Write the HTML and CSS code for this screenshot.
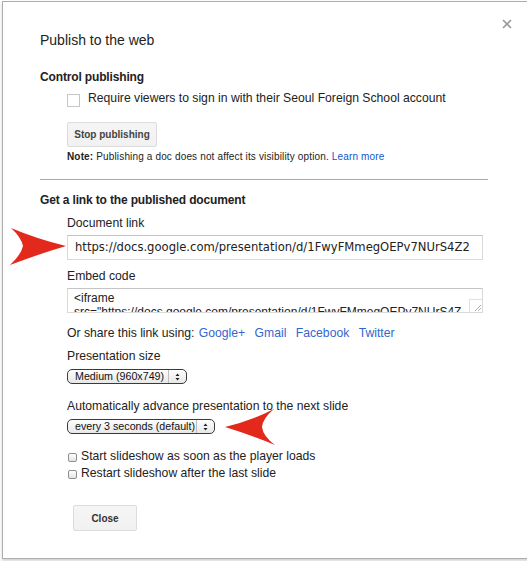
FILE: index.html
```html
<!DOCTYPE html>
<html lang="en">
<head>
    <meta charset="UTF-8">
    <title>Publish to the web</title>
    <link rel="stylesheet" href="styles.css">
</head>
<body>
    <div class="dialog">
        <svg class="close-x" width="10" height="10" viewBox="0 0 10 10">
            <path d="M1 1 L9 9 M9 1 L1 9" stroke="#9a9a9a" stroke-width="1.6" fill="none"/>
        </svg>

        <h1 class="title">Publish to the web</h1>

        <h2 class="section">Control publishing</h2>
        <div class="indent">
            <label class="require-row">
                <span class="square-box"></span>
                Require viewers to sign in with their Seoul Foreign School account
            </label>
            <button class="gbtn stop-btn">Stop publishing</button>
            <p class="note"><b>Note:</b> Publishing a doc does not affect its visibility option. <a href="#">Learn more</a></p>
        </div>

        <hr class="divider">

        <h2 class="section link-head">Get a link to the published document</h2>
        <div class="indent">
            <div class="field-label doc-label">Document link</div>
            <div class="textbox">https://docs.google.com/presentation/d/1FwyFMmegOEPv7NUrS4Z2</div>

            <div class="field-label embed-label">Embed code</div>
            <div class="embed">
                <div class="embed-text">&lt;iframe<br>src="https://docs.google.com/presentation/d/1FwyFMmegOEPv7NUrS4Z</div>
                <span class="resizer">
                    <svg width="8" height="8" viewBox="0 0 8 8">
                        <path d="M1 7 L7 1 M4 7 L7 4" stroke="#999" stroke-width="0.8" fill="none"/>
                    </svg>
                </span>
            </div>

            <div class="share">Or share this link using: <a href="#">Google+</a> <a href="#">Gmail</a> <a href="#">Facebook</a> <a href="#">Twitter</a></div>

            <div class="field-label size-label">Presentation size</div>
            <div class="mac-select size-select">
                <span class="mac-select-text">Medium (960x749)</span>
                <span class="mac-select-arrows">
                    <svg width="5" height="8" viewBox="0 0 5 8">
                        <path d="M0.5 3 L2.5 0.5 L4.5 3 Z M0.5 5 L2.5 7.5 L4.5 5 Z" fill="#222"/>
                    </svg>
                </span>
            </div>

            <div class="field-label advance-label">Automatically advance presentation to the next slide</div>
            <div class="mac-select advance-select">
                <span class="mac-select-text">every 3 seconds (default)</span>
                <span class="mac-select-arrows">
                    <svg width="5" height="8" viewBox="0 0 5 8">
                        <path d="M0.5 3 L2.5 0.5 L4.5 3 Z M0.5 5 L2.5 7.5 L4.5 5 Z" fill="#222"/>
                    </svg>
                </span>
            </div>

            <div class="options">
                <label class="option-row"><span class="mini-box"></span>Start slideshow as soon as the player loads</label>
                <label class="option-row"><span class="mini-box"></span>Restart slideshow after the last slide</label>
            </div>

            <button class="gbtn close-btn">Close</button>
        </div>
    </div>

    <!-- red callout arrows drawn on top of the screenshot -->
    <svg class="arrow arrow-left" width="60" height="42" viewBox="0 0 60 42">
        <path d="M2 1 Q28 12 57 19 Q30 27 1 38 Q12 28 14 19 Q12 10 2 1 Z" fill="#e3281c"/>
    </svg>
    <svg class="arrow arrow-right" width="56" height="40" viewBox="0 0 56 40">
        <path d="M51 1 Q30 12 2 19 Q28 27 52 37 Q40 28 39 19 Q40 10 51 1 Z" fill="#e3281c"/>
    </svg>
</body>
</html>
```

FILE: styles.css
```css
body {
    margin: 0;
    position: relative;
    height: 561px;
    overflow: hidden;
    background: #fff;
    font-family: "Liberation Sans", Arial, sans-serif;
    color: #222;
}
.dialog {
    position: relative;
    box-sizing: border-box;
    margin: 1px 0 0 2px;
    width: 560px;
    height: 558px;
    padding: 28px 0 0 37px;
    border: 1px solid #adadad;
    box-shadow: 0 2px 3px rgba(0, 0, 0, 0.18);
    background: #fff;
}
.close-x {
    position: absolute;
    top: 17px;
    left: 499px;
}
.title {
    margin: 0;
    font-size: 14px;
    line-height: 20px;
    font-weight: normal;
}
.section {
    margin: 19px 0 0;
    font-size: 12px;
    line-height: 16px;
    letter-spacing: -0.15px;
    font-weight: bold;
}
.section.link-head {
    margin-top: 12px;
}
.indent {
    padding-left: 27px;
}
.require-row {
    display: flex;
    align-items: flex-start;
    margin-top: 5px;
    font-size: 12.2px;
    line-height: 16px;
}
.square-box {
    width: 11px;
    height: 11px;
    margin: 4px 8px 0 0;
    border: 1px solid #c6c6c6;
    background: #fff;
    flex-shrink: 0;
}
.gbtn {
    display: block;
    box-sizing: border-box;
    height: 25px;
    padding: 0;
    border: 1px solid #dcdcdc;
    border-radius: 2px;
    background: linear-gradient(#f5f5f5, #f1f1f1);
    color: #444;
    font-family: "Liberation Sans", Arial, sans-serif;
    font-size: 10px;
    font-weight: bold;
    white-space: nowrap;
}
.stop-btn {
    margin-top: 15px;
    width: 90px;
}
.note {
    margin: 3px 0 0;
    font-size: 10px;
    line-height: 14px;
    letter-spacing: 0.15px;
    color: #222;
}
.note a {
    color: #15c;
    text-decoration: none;
}
.divider {
    width: 448px;
    height: 0;
    margin: 15px 0 0;
    border: 0;
    border-top: 1px solid #a8a8a8;
}
.field-label {
    font-size: 12.2px;
    line-height: 16px;
}
.doc-label {
    margin-top: 7px;
}
.textbox {
    box-sizing: border-box;
    width: 416px;
    height: 25px;
    margin-top: 4px;
    padding: 0 0 0 7px;
    border: 1px solid #d9d9d9;
    border-top-color: #c4c4c4;
    font-family: "DejaVu Sans", sans-serif;
    font-size: 11.6px;
    line-height: 23px;
    white-space: nowrap;
    overflow: hidden;
}
.embed-label {
    margin-top: 8px;
}
.embed {
    position: relative;
    box-sizing: border-box;
    width: 416px;
    height: 25px;
    margin-top: 4px;
    border: 1px solid #d9d9d9;
    border-top-color: #c4c4c4;
    overflow: hidden;
}
.embed-text {
    padding: 2px 0 0 6px;
    font-size: 12px;
    line-height: 14px;
    white-space: nowrap;
}
.resizer {
    position: absolute;
    right: 0;
    bottom: 0;
    width: 12px;
    height: 12px;
    border-left: 1px solid #e0e0e0;
    border-top: 1px solid #e0e0e0;
    background: #fff;
    display: flex;
    align-items: flex-end;
    justify-content: flex-end;
}
.share {
    margin-top: 12px;
    font-size: 12.2px;
    line-height: 16px;
}
.share a {
    margin-left: 1px;
    color: #3366cc;
    text-decoration: none;
}
.share a + a {
    margin-left: 6px;
}
.size-label {
    margin-top: 7px;
}
.mac-select {
    display: flex;
    align-items: center;
    justify-content: space-between;
    box-sizing: border-box;
    height: 15px;
    margin-top: 5px;
    border: 1px solid #3a3a3a;
    border-radius: 5px;
    background: linear-gradient(#fdfdfd, #e8e8e8);
    font-size: 10.7px;
    color: #111;
    white-space: nowrap;
}
.mac-select-text {
    padding: 0 0 0 7px;
    line-height: 13px;
}
.mac-select-arrows {
    display: flex;
    align-items: center;
    height: 13px;
    padding: 0 6px 0 6px;
    border-left: 1px solid #bdbdbd;
}
.size-select {
    width: 120px;
}
.advance-label {
    margin-top: 14px;
}
.advance-select {
    width: 148px;
}
.options {
    margin-top: 14px;
}
.option-row {
    display: flex;
    align-items: center;
    font-size: 12.2px;
    line-height: 17px;
}
.mini-box {
    box-sizing: border-box;
    width: 9px;
    height: 9px;
    margin: 2px 4px 0 1px;
    border: 1px solid #8e8e8e;
    border-radius: 2px;
    background: linear-gradient(#fff, #e3e3e3);
    flex-shrink: 0;
}
.close-btn {
    margin: 23px 0 0 6px;
    width: 64px;
    height: 26px;
    color: #333;
}
.arrow {
    position: absolute;
}
.arrow-left {
    left: 9px;
    top: 227px;
}
.arrow-right {
    left: 223px;
    top: 408px;
}
```
